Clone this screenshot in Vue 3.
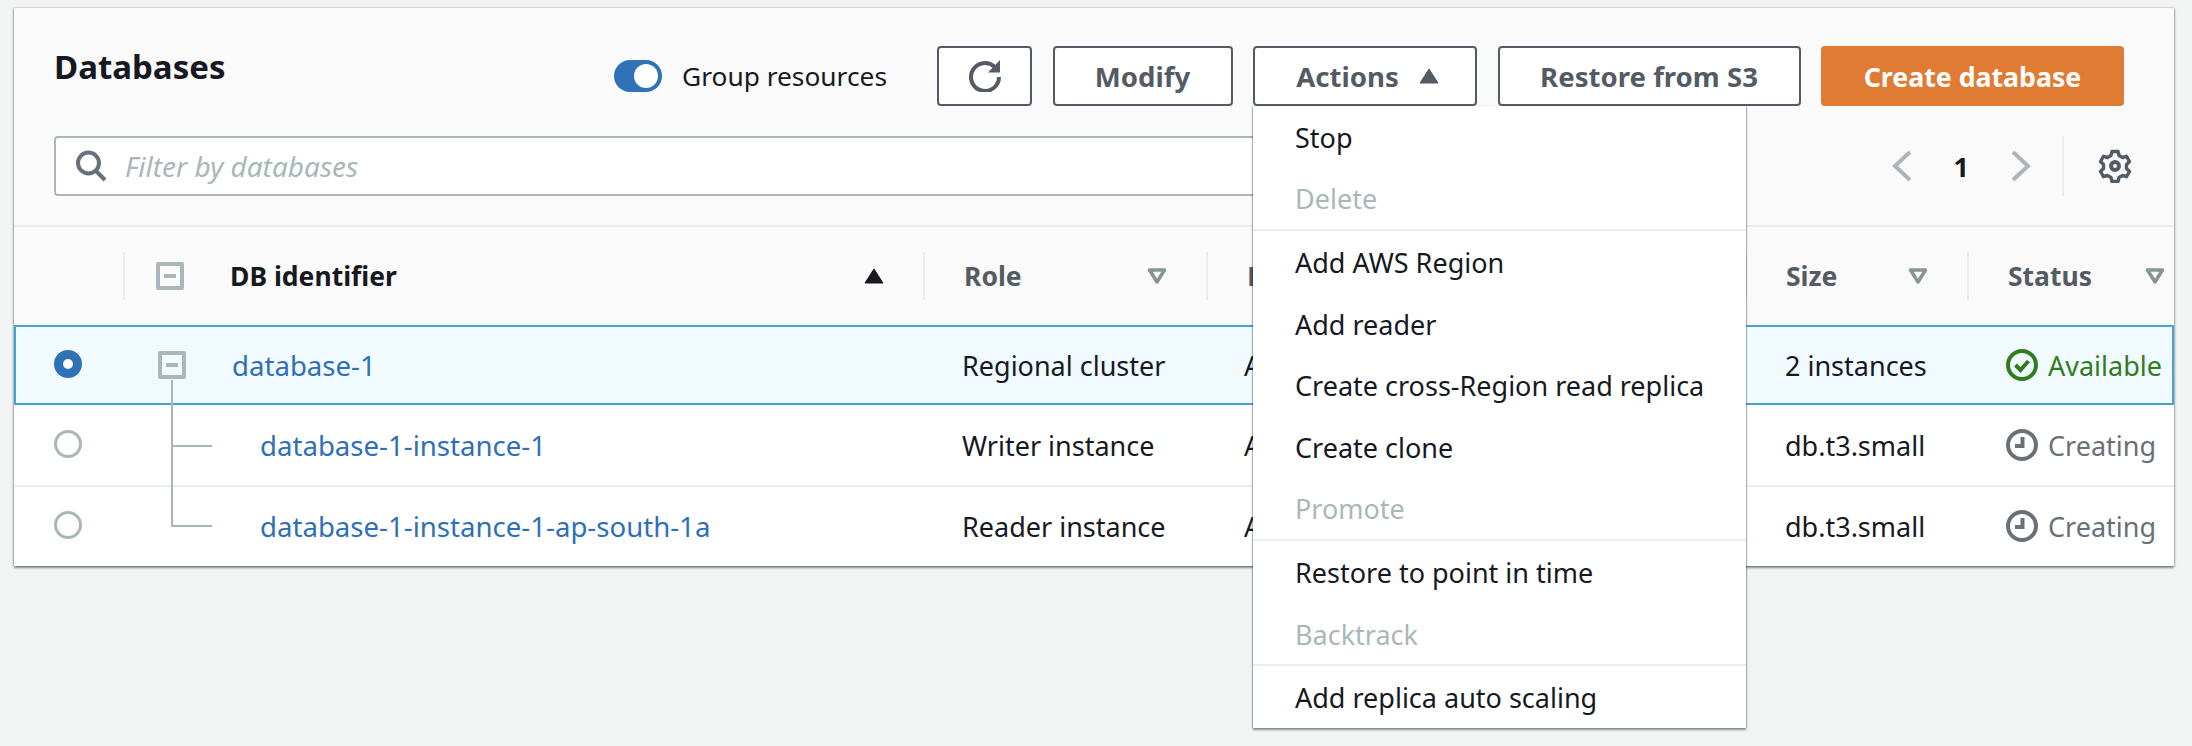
<script setup>
const menuItems = [
  { label: 'Stop' },
  { label: 'Delete', disabled: true, divider: true },
  { label: 'Add AWS Region' },
  { label: 'Add reader' },
  { label: 'Create cross-Region read replica' },
  { label: 'Create clone' },
  { label: 'Promote', disabled: true, divider: true },
  { label: 'Restore to point in time' },
  { label: 'Backtrack', disabled: true, divider: true },
  { label: 'Add replica auto scaling' }
]

const rows = [
  { name: 'database-1', role: 'Regional cluster', engine: 'Aurora MySQL', size: '2 instances', status: 'Available', parent: true },
  { name: 'database-1-instance-1', role: 'Writer instance', engine: 'Aurora MySQL', size: 'db.t3.small', status: 'Creating' },
  { name: 'database-1-instance-1-ap-south-1a', role: 'Reader instance', engine: 'Aurora MySQL', size: 'db.t3.small', status: 'Creating', last: true }
]

const filterCols = [
  { label: 'Role', cls: 'col-role' },
  { label: 'Engine', cls: 'col-engine' },
  { label: 'Size', cls: 'col-size' },
  { label: 'Status', cls: 'col-status' }
]
</script>

<template>
  <div class="page">
    <section class="card">
      <header class="head">
        <div class="toolbar">
          <h1 class="title">Databases</h1>
          <div class="toggle"><span class="knob"></span></div>
          <span class="toggle-label">Group resources</span>
          <div class="actions">
            <button class="btn btn-refresh" aria-label="Refresh">
              <svg width="32" height="32" viewBox="0 0 32 32" fill="none" stroke="#545b64" stroke-width="4">
                <path d="M25.500 6.700A14 14 0 1 0 30 17" />
                <path d="M31 0v12.500H19z" fill="#545b64" stroke="none" />
              </svg>
            </button>
            <button class="btn btn-modify">Modify</button>
            <button class="btn btn-actions">
              Actions
              <svg class="caret" width="20" height="16" viewBox="0 0 20 16"><path d="M10 1L19 15H1z" fill="#545b64" stroke="#545b64" stroke-linejoin="round" /></svg>
            </button>
            <button class="btn btn-restore">Restore from S3</button>
            <button class="btn btn-primary">Create database</button>
          </div>
        </div>
        <div class="filter-row">
          <div class="filter">
            <svg width="32" height="32" viewBox="0 0 32 32" fill="none" stroke="#687078" stroke-width="4">
              <circle cx="13.500" cy="13" r="10.500" />
              <path d="M21 21l9 9" />
            </svg>
            <span class="placeholder">Filter by databases</span>
          </div>
          <div class="pager">
            <svg width="20" height="32" viewBox="0 0 20 32" fill="none" stroke="#aab7b8" stroke-width="4"><path d="M18 2L3 16l15 14" /></svg>
            <span class="page-no">1</span>
            <svg width="20" height="32" viewBox="0 0 20 32" fill="none" stroke="#aab7b8" stroke-width="4"><path d="M2 2l15 14L2 30" /></svg>
          </div>
          <div class="settings">
            <svg width="34" height="34" viewBox="0 0 34 34" fill="none" stroke="#545b64">
              <circle cx="17" cy="17" r="4" stroke-width="4" />
              <path stroke-width="3.400" stroke-linejoin="round" d="M14 2.500h6l1 4 3.500 2 4-1.200 3 5.200-3 3v4l3 3-3 5.200-4-1.200-3.500 2-1 4h-6l-1-4-3.500-2-4 1.200-3-5.200 3-3v-4l-3-3 3-5.200 4 1.200 3.500-2z" />
            </svg>
          </div>
        </div>
      </header>

      <div class="grid thead">
        <div class="th col-select"></div>
        <div class="th col-name">
          <span class="tree-box"><i></i></span>
          <span class="th-label">DB identifier</span>
          <svg class="sort" width="20" height="16" viewBox="0 0 20 16"><path d="M10 1L19 15H1z" fill="#16191f" stroke="#16191f" stroke-linejoin="round" /></svg>
        </div>
        <div v-for="col in filterCols" :key="col.label" class="th" :class="col.cls">
          <span class="th-label muted">{{ col.label }}</span>
          <svg class="sort" width="20" height="16" viewBox="0 0 20 16" fill="none"><path d="M2.500 2h15L10 14z" stroke="#879596" stroke-width="3.500" stroke-linejoin="round" /></svg>
        </div>
      </div>

      <div v-for="row in rows" :key="row.name" class="grid row" :class="{ selected: row.parent, last: row.last }">
        <span v-if="!row.parent" class="branch" :class="{ end: row.last }"></span>
        <div class="td col-select">
          <span class="radio" :class="{ on: row.parent }"></span>
        </div>
        <div class="td col-name" :class="{ child: !row.parent }">
          <span v-if="row.parent" class="tree-box"><i></i></span>
          <a class="link">{{ row.name }}</a>
        </div>
        <div class="td col-role">{{ row.role }}</div>
        <div class="td col-engine">{{ row.engine }}</div>
        <div class="td col-size">{{ row.size }}</div>
        <div class="td col-status" :class="row.parent ? 'ok' : 'busy'">
          <svg v-if="row.parent" width="32" height="32" viewBox="0 0 32 32" fill="none" stroke="currentColor">
            <circle cx="16" cy="16" r="14" stroke-width="4" />
            <path d="M9.500 16l5 5 8-9" stroke-width="4" />
          </svg>
          <svg v-else width="32" height="32" viewBox="0 0 32 32" fill="none" stroke="currentColor">
            <circle cx="16" cy="16" r="14" stroke-width="4" />
            <path d="M16.500 8v9H9" stroke-width="4" />
          </svg>
          <span>{{ row.status }}</span>
        </div>
      </div>

      <div class="menu">
        <div
          v-for="item in menuItems"
          :key="item.label"
          class="menu-item"
          :class="{ disabled: item.disabled, divided: item.divider }"
        >{{ item.label }}</div>
      </div>
    </section>
  </div>
</template>

<style>
html, body {
  margin: 0;
  background: #f2f3f3;
}
</style>

<style scoped>
.page {
  width: 2192px;
  height: 746px;
  padding: 8px 18px 0 14px;
  box-sizing: border-box;
  font-family: "Noto Sans", "Open Sans", sans-serif;
  font-size: 27px;
  color: #16191f;
  background: #f2f3f3;
  overflow: hidden;
}

.card {
  position: relative;
  background: #fff;
  box-shadow: 0 2px 2px rgba(0, 28, 36, 0.45), 1px 0 2px rgba(0, 28, 36, 0.2), -1px 0 2px rgba(0, 28, 36, 0.2);
}

.head {
  padding: 38px 44px 30px 40px;
  background: #fafafa;
  border-bottom: 2px solid #eaeded;
  height: 219px;
  box-sizing: border-box;
}

.toolbar {
  display: flex;
  align-items: center;
  height: 60px;
  margin-right: 6px;
}

.title {
  margin: -18px 0 0;
  font-size: 33px;
  font-weight: 700;
  line-height: 40px;
}

.toggle {
  width: 48px;
  height: 32px;
  margin-left: auto;
  margin-right: 20px;
  padding: 4px;
  box-sizing: border-box;
  display: flex;
  justify-content: flex-end;
  background: #2f72b8;
  border-radius: 16px;
}

.knob {
  width: 24px;
  height: 24px;
  background: #fff;
  border-radius: 50%;
}

.toggle-label {
  margin-right: 50px;
  font-size: 26.300px;
  white-space: nowrap;
}

.actions {
  display: flex;
  gap: 20.500px;
}

.btn {
  height: 60px;
  padding: 0;
  display: flex;
  align-items: center;
  justify-content: center;
  gap: 20px;
  font-family: inherit;
  font-size: 27.600px;
  font-weight: 700;
  color: #545b64;
  background: #fff;
  border: 2px solid #545b64;
  border-radius: 4px;
  box-sizing: border-box;
}

.btn-refresh { width: 95px; }
.btn-modify { width: 180px; }
.btn-actions { width: 224px; padding-left: 5px; }
.btn-restore { width: 303px; }

.btn-primary {
  width: 303px;
  font-size: 26.700px;
  color: #fff;
  background: #df7b32;
  border-color: #df7b32;
}

.filter-row {
  display: flex;
  align-items: center;
  height: 60px;
  margin-top: 30px;
}

.filter {
  width: 1300px;
  height: 60px;
  padding-left: 19px;
  display: flex;
  align-items: center;
  gap: 18px;
  background: #fff;
  border: 2px solid #aab7b8;
  border-radius: 4px;
  box-sizing: border-box;
}

.placeholder {
  font-size: 28px;
  font-style: italic;
  color: #aab7b8;
}

.pager {
  margin-left: auto;
  margin-right: -1px;
  display: flex;
  align-items: center;
  gap: 42px;
}

.page-no {
  font-weight: 700;
}

.settings {
  height: 60px;
  margin-left: 32px;
  margin-right: -2px;
  padding-left: 34px;
  display: flex;
  align-items: center;
  border-left: 2px solid #eaeded;
}

.grid {
  display: grid;
  grid-template-columns: 109px 800px 283px 539px 222px 207px;
}

.thead {
  height: 98px;
  background: #fafafa;
  align-items: center;
}

.th {
  height: 48px;
  display: flex;
  align-items: center;
  padding-left: 39px;
  padding-right: 39px;
  font-size: 26.500px;
  border-left: 2px solid #eaeded;
  box-sizing: border-box;
}

.th.col-select {
  border-left: 0;
}

.th.col-name {
  padding-left: 31px;
}

.th.col-status {
  padding-right: 9px;
}

.th-label {
  font-weight: 700;
}

.muted {
  color: #545b64;
}

.tree-box {
  position: relative;
  z-index: 1;
  flex: none;
  width: 28px;
  height: 28px;
  margin-right: 46px;
  display: flex;
  align-items: center;
  justify-content: center;
  border: 4px solid #aab7b8;
  border-radius: 2px;
  box-sizing: border-box;
}

.tree-box i {
  width: 12px;
  height: 4px;
  background: #aab7b8;
}

.sort {
  margin-left: auto;
}

.row {
  position: relative;
  height: 81px;
  align-items: center;
  border-top: 2px solid #eaeded;
  box-sizing: border-box;
}

.row.last {
  padding-bottom: 1px;
}

.row.selected {
  height: 80px;
  background: #f1faff;
  border-top: 0;
  box-shadow: inset 0 0 0 2px #44a4cc;
}

.row.selected + .row {
  border-top: 0;
  height: 80px;
}

.td {
  padding-left: 38px;
  white-space: nowrap;
}

.td.col-select {
  display: flex;
  padding-left: 40px;
}

.radio {
  width: 28px;
  height: 28px;
  margin-bottom: 2px;
  border: 3px solid #aab7b8;
  border-radius: 50%;
  box-sizing: border-box;
  background: #fff;
}

.radio.on {
  border: 9px solid #2f72b8;
}

.td.col-name {
  display: flex;
  align-items: center;
  padding-left: 35px;
}

.td.child {
  padding-left: 137px;
}

/* tree connector, runs up over the row above to the parent's box */
.branch {
  position: absolute;
  left: 157px;
  top: -25px;
  width: 41px;
  height: 67px;
  border-left: 2px solid #aab7b8;
  border-bottom: 2px solid #aab7b8;
  box-sizing: border-box;
}

.branch.end {
  top: -41px;
  height: 81px;
}

.link {
  font-size: 27.600px;
  color: #2f6fb7;
}

.td.col-role {
  padding-left: 39px;
}

.td.col-size {
  padding-left: 40px;
}

.td.col-status {
  display: flex;
  align-items: center;
  gap: 10px;
  padding-left: 39px;
}

.ok { color: #2f7d1e; }
.busy { color: #687078; }

.menu {
  position: absolute;
  left: 1239px;
  top: 98px;
  width: 493px;
  height: 622px;
  background: #fff;
  box-shadow: 0 2px 2px rgba(0, 28, 36, 0.45), 1px 0 1px rgba(0, 28, 36, 0.2), -1px 0 1px rgba(0, 28, 36, 0.2);
}

.menu-item {
  height: 61.600px;
  padding-left: 42px;
  padding-top: 1px;
  display: flex;
  align-items: center;
  box-sizing: border-box;
  white-space: nowrap;
}

.menu-item.divided {
  height: 63.600px;
  border-bottom: 2px solid #eaeded;
}

.menu-item.disabled {
  color: #aab7b8;
}
</style>
